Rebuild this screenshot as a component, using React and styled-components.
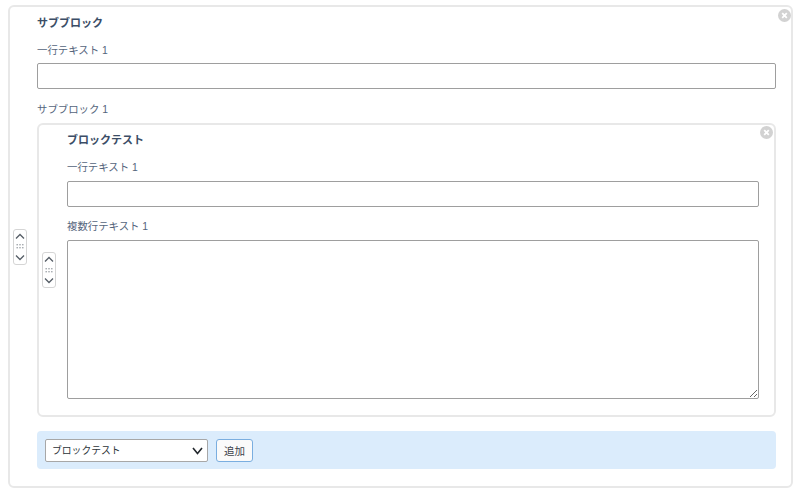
import React from 'react';
import styled, { createGlobalStyle } from 'styled-components';

const GlobalStyle = createGlobalStyle`
  html, body {
    margin: 0;
    padding: 0;
    background: #fff;
  }
  body {
    font-family: "Liberation Sans", "Noto Sans CJK JP", sans-serif;
    color: #32373c;
  }
`;

function CloseIcon() {
  return (
    <svg width="13" height="13" viewBox="0 0 13 13">
      <circle cx="6.5" cy="6.5" r="6.5" fill="#d2d2d2" />
      <path d="M4.2 4.2l4.6 4.6M8.8 4.2l-4.6 4.6" stroke="#fff" strokeWidth="1.8" fill="none" />
    </svg>
  );
}

function Mover() {
  return (
    <MoverBox>
      <svg width="10" height="7" viewBox="0 0 10 7">
        <path d="M1 5.5l4-4 4 4" stroke="#555d66" strokeWidth="1.3" fill="none" />
      </svg>
      <svg width="8" height="5" viewBox="0 0 8 5" fill="#a0a5aa">
        <rect x="0.5" y="0" width="1.4" height="1.4" />
        <rect x="3.3" y="0" width="1.4" height="1.4" />
        <rect x="6.1" y="0" width="1.4" height="1.4" />
        <rect x="0.5" y="3" width="1.4" height="1.4" />
        <rect x="3.3" y="3" width="1.4" height="1.4" />
        <rect x="6.1" y="3" width="1.4" height="1.4" />
      </svg>
      <svg width="10" height="7" viewBox="0 0 10 7">
        <path d="M1 1.5l4 4 4-4" stroke="#555d66" strokeWidth="1.3" fill="none" />
      </svg>
    </MoverBox>
  );
}

export default function App() {
  return (
    <Page>
      <GlobalStyle />
      <OuterBlock>
        <Mover />
        <CloseButton $right={0} $top={2}><CloseIcon /></CloseButton>
        <BlockTitle>サブブロック</BlockTitle>
        <FieldLabel $before={12} $after={4}>一行テキスト 1</FieldLabel>
        <TextInput type="text" />
        <FieldLabel $before={13} $after={5}>サブブロック 1</FieldLabel>
        <InnerBlock>
          <Mover />
          <CloseButton $right={1} $top={1}><CloseIcon /></CloseButton>
          <BlockTitle>ブロックテスト</BlockTitle>
          <FieldLabel $before={12} $after={5}>一行テキスト 1</FieldLabel>
          <TextInput type="text" />
          <FieldLabel $before={12} $after={5}>複数行テキスト 1</FieldLabel>
          <TextArea />
        </InnerBlock>
        <AddPanel>
          <SelectWrap>
            <BlockSelect defaultValue="block">
              <option value="block">ブロックテスト</option>
            </BlockSelect>
            <SelectArrow width="11" height="8" viewBox="0 0 11 8">
              <path d="M1 1l4.5 5.5L10 1" stroke="#23282d" strokeWidth="1.6" fill="none" />
            </SelectArrow>
          </SelectWrap>
          <AddButton type="button">追加</AddButton>
        </AddPanel>
      </OuterBlock>
    </Page>
  );
}

const Page = styled.div`
  width: 800px;
  height: 501px;
  padding: 5px 7px 0 8px;
  box-sizing: border-box;
  overflow: hidden;
`;

const OuterBlock = styled.section`
  position: relative;
  height: 483px;
  box-sizing: border-box;
  padding: 8px 15px 0 27px;
  border: 2px solid #e8e8e8;
  border-radius: 6px;
  background: #fff;
`;

const InnerBlock = styled.section`
  position: relative;
  height: 294px;
  box-sizing: border-box;
  padding: 7px 15px 0 28px;
  border: 2px solid #e8e8e8;
  border-radius: 6px;
`;

const MoverBox = styled.div`
  position: absolute;
  top: 50%;
  left: 3px;
  transform: translateY(-50%);
  width: 14px;
  height: 36px;
  box-sizing: border-box;
  display: flex;
  flex-direction: column;
  align-items: center;
  justify-content: space-between;
  padding: 3px 0;
  background: #fff;
  border: 1px solid #d5d5d5;
  border-radius: 3px;
`;

const CloseButton = styled.span`
  position: absolute;
  top: ${props => props.$top}px;
  right: ${props => props.$right}px;
  display: flex;
`;

const BlockTitle = styled.h3`
  margin: 0;
  font-size: 11px;
  line-height: 16px;
  font-weight: 700;
  color: #3b4d66;
`;

const FieldLabel = styled.div`
  margin-top: ${props => props.$before}px;
  margin-bottom: ${props => props.$after}px;
  font-size: 10.4px;
  line-height: 16px;
  color: #55657c;
`;

const TextInput = styled.input`
  display: block;
  width: 100%;
  height: 26px;
  box-sizing: border-box;
  margin: 0;
  padding: 0 6px;
  border: 1px solid #9e9e9e;
  border-radius: 2px;
  background: #fff;
`;

const TextArea = styled.textarea`
  display: block;
  width: 100%;
  height: 159px;
  box-sizing: border-box;
  margin: 0;
  padding: 4px 6px;
  border: 1px solid #9e9e9e;
  border-radius: 2px;
  background: #fff;
`;

const AddPanel = styled.div`
  display: flex;
  align-items: center;
  gap: 8px;
  height: 38px;
  box-sizing: border-box;
  margin-top: 14px;
  padding: 0 8px;
  background: #dbecfc;
  border-radius: 4px;
`;

const SelectWrap = styled.div`
  position: relative;
  display: flex;
`;

const BlockSelect = styled.select`
  appearance: none;
  width: 163px;
  height: 23px;
  box-sizing: border-box;
  padding: 0 6px;
  font-family: inherit;
  font-size: 9.8px;
  color: #2c3338;
  background: #fff;
  border: 1px solid #a7a7a7;
  border-radius: 2px;
`;

const SelectArrow = styled.svg`
  position: absolute;
  top: 8px;
  right: 5px;
  pointer-events: none;
`;

const AddButton = styled.button`
  width: 37px;
  height: 23px;
  box-sizing: border-box;
  padding: 0;
  font-family: inherit;
  font-size: 10.5px;
  color: #3c434a;
  background: #fafafa;
  border: 1px solid #7aaee0;
  border-radius: 3px;
`;
